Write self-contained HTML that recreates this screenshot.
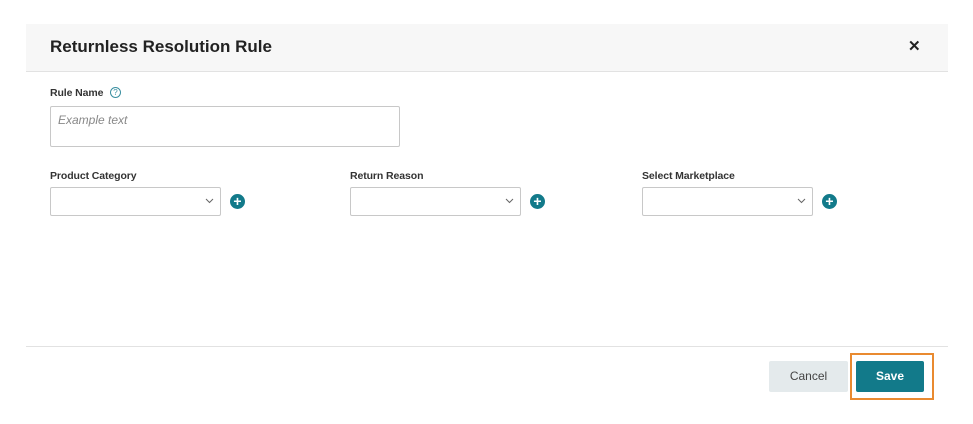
<!DOCTYPE html>
<html><head><style>
body{margin:0;width:973px;height:424px;background:#fff;font-family:"Liberation Sans",sans-serif;position:relative;overflow:hidden}
.a{position:absolute}
.lbl{font-size:10.5px;font-weight:bold;color:#333;letter-spacing:-0.1px}
.sel{border:1px solid #c8c8c8;height:27px;width:169px;border-radius:2px;background:#fff}
.sel svg{position:absolute;right:6px;top:10px}
.plus{width:15px;height:15px;border-radius:50%;background:#127a8a;color:#fff;font-size:14px;font-weight:bold;line-height:15px;text-align:center}
</style></head><body>
<div class="a" style="left:26px;top:24px;width:922px;height:47px;background:#f7f7f7;border-bottom:1px solid #e2e2e2"></div>
<div class="a" style="left:50px;top:37px;font-size:17px;font-weight:bold;color:#222">Returnless Resolution Rule</div>
<div class="a" style="left:908px;top:37px;font-size:15px;font-weight:bold;color:#222">✕</div>
<div class="a lbl" style="left:50px;top:87px">Rule Name</div>
<div class="a" style="left:110px;top:87px;width:9px;height:9px;border:1px solid #3a8fa0;border-radius:50%;font-size:8px;color:#3a8fa0;text-align:center;line-height:9px">?</div>
<div class="a" style="left:50px;top:106px;width:348px;height:39px;border:1px solid #c8c8c8;border-radius:2px"></div>
<div class="a" style="left:58px;top:113px;font-size:12px;font-style:italic;color:#888">Example text</div>
<div class="a lbl" style="left:50px;top:170px">Product Category</div>
<div class="a lbl" style="left:350px;top:170px">Return Reason</div>
<div class="a lbl" style="left:642px;top:170px">Select Marketplace</div>
<div class="a sel" style="left:50px;top:187px"><svg width="9" height="6"><path d="M1 1l3.5 3.5L8 1" stroke="#666" fill="none"/></svg></div>
<div class="a sel" style="left:350px;top:187px"><svg width="9" height="6"><path d="M1 1l3.5 3.5L8 1" stroke="#666" fill="none"/></svg></div>
<div class="a sel" style="left:642px;top:187px"><svg width="9" height="6"><path d="M1 1l3.5 3.5L8 1" stroke="#666" fill="none"/></svg></div>
<div class="a plus" style="left:230px;top:194px">+</div>
<div class="a plus" style="left:530px;top:194px">+</div>
<div class="a plus" style="left:822px;top:194px">+</div>
<div class="a" style="left:26px;top:346px;width:922px;height:1px;background:#e2e2e2"></div>
<div class="a" style="left:769px;top:361px;width:79px;height:31px;background:#e4eaec;border-radius:2px;font-size:12px;color:#444;text-align:center;line-height:31px">Cancel</div>
<div class="a" style="left:850px;top:353px;width:80px;height:43px;border:2px solid #e98a30"></div>
<div class="a" style="left:856px;top:361px;width:68px;height:31px;background:#127a8a;border-radius:2px;font-size:12px;font-weight:bold;color:#fff;text-align:center;line-height:31px">Save</div>
</body></html>
